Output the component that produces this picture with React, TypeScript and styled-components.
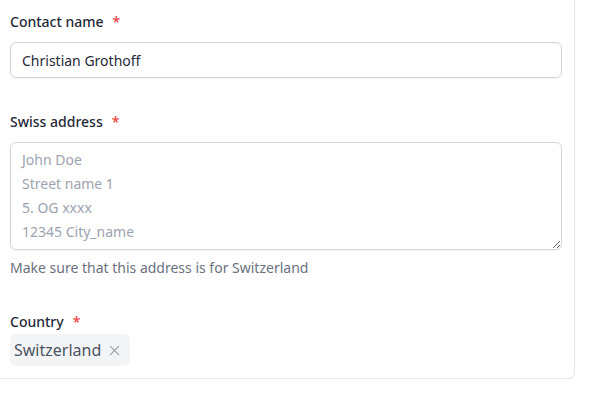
import React from "react";
import styled, { createGlobalStyle } from "styled-components";

const Global = createGlobalStyle`
  html, body { margin: 0; padding: 0; background: #ffffff; }
  body { font-family: "Noto Sans", "Open Sans", sans-serif; }
  * { box-sizing: border-box; }
`;

const Card = styled.div`
  width: 575px;
  padding: 10px 12px 12px 10px;
  background: #ffffff;
  border-right: 1px solid #e5e7eb;
  border-bottom: 1px solid #e5e7eb;
  border-bottom-right-radius: 6px;
  display: flex;
  flex-direction: column;
  gap: 32px;
`;

const Field = styled.div`
  display: flex;
  flex-direction: column;
`;

const Label = styled.label<{ $gap?: number }>`
  display: block;
  font-size: 14px;
  line-height: 24px;
  font-weight: 500;
  color: #1f2937;
  margin-bottom: ${(p) => p.$gap ?? 8}px;
`;

const Required = styled.span`
  color: #ef4444;
  margin-left: 9px;
`;

const TextInput = styled.input`
  width: 100%;
  height: 36px;
  padding: 0 11px;
  font-family: inherit;
  font-size: 14px;
  color: #1f2937;
  border: 1px solid #d1d5db;
  border-radius: 6px;
  box-shadow: 0 1px 2px rgba(0, 0, 0, 0.05);
  background: #ffffff;
  outline: none;
`;

const TextArea = styled.textarea`
  width: 100%;
  height: 108px;
  padding: 5px 11px;
  font-family: inherit;
  font-size: 14px;
  line-height: 24px;
  color: #1f2937;
  border: 1px solid #d1d5db;
  border-radius: 6px;
  box-shadow: 0 1px 2px rgba(0, 0, 0, 0.05);
  background: #ffffff;
  resize: vertical;
  outline: none;
  display: block;
  &::placeholder { color: #9ca3af; }
`;

const Help = styled.p`
  margin: 8px 0 0;
  font-size: 14px;
  line-height: 20px;
  color: #6b7280;
`;

const Chips = styled.div`
  display: flex;
  gap: 6px;
`;

const Chip = styled.span`
  display: inline-flex;
  align-items: center;
  gap: 8px;
  height: 32px;
  padding: 0 10px 0 4px;
  background: #f3f4f6;
  border-radius: 6px;
  font-size: 16px;
  color: #4b5563;
`;

const Remove = styled.button`
  display: inline-flex;
  align-items: center;
  justify-content: center;
  padding: 0;
  border: none;
  background: transparent;
  color: #9ca3af;
  cursor: pointer;
`;

export default function App() {
  return (
    <>
      <Global />
      <Card>
        <Field>
          <Label>
            Contact name<Required>*</Required>
          </Label>
          <TextInput defaultValue="Christian Grothoff" />
        </Field>
        <Field>
          <Label>
            Swiss address<Required>*</Required>
          </Label>
          <TextArea
            rows={4}
            placeholder={"John Doe\nStreet name 1\n5. OG xxxx\n12345 City_name"}
          />
          <Help>Make sure that this address is for Switzerland</Help>
        </Field>
        <Field>
          <Label $gap={0}>
            Country<Required>*</Required>
          </Label>
          <Chips>
            <Chip>
              Switzerland
              <Remove aria-label="Remove">
                <svg width="11" height="11" viewBox="0 0 12 12" fill="none" stroke="currentColor" strokeWidth="1.5" strokeLinecap="round">
                  <path d="M1.5 1.5l9 9M10.5 1.5l-9 9" />
                </svg>
              </Remove>
            </Chip>
          </Chips>
        </Field>
      </Card>
    </>
  );
}
